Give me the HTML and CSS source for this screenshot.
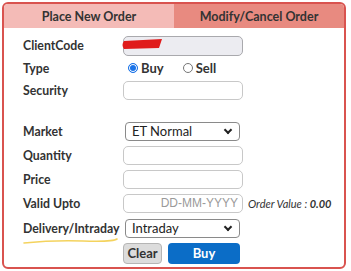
FILE: index.html
```html
<!DOCTYPE html>
<html lang="en">
<head>
    <meta charset="UTF-8">
    <title>Order Entry</title>
    <link rel="stylesheet" href="styles.css">
</head>
<body>
    <div class="panel">
        <div class="tabs">
            <div class="tab tab-new">Place New Order</div>
            <div class="tab tab-modify">Modify/Cancel Order</div>
        </div>

        <form class="order-form">
            <div class="row r-client">
                <label>ClientCode</label>
                <div class="field">
                    <input type="text" class="txt disabled">
                    <svg class="scribble" width="44" height="12" viewBox="0 0 44 12">
                        <path d="M3 3 Q0 7 3 11 L38 10 L41 1 Z" fill="#e01b1b"/>
                    </svg>
                </div>
            </div>
            <div class="row r-type">
                <label>Type</label>
                <div class="radios">
                    <span class="radio on"></span><span class="rlabel">Buy</span>
                    <span class="radio"></span><span class="rlabel">Sell</span>
                </div>
            </div>
            <div class="row r-security">
                <label>Security</label>
                <input type="text" class="txt">
            </div>
            <div class="row r-market">
                <label>Market</label>
                <div class="sel">ET Normal<span class="chev"></span></div>
            </div>
            <div class="row r-qty">
                <label>Quantity</label>
                <input type="text" class="txt">
            </div>
            <div class="row r-price">
                <label>Price</label>
                <input type="text" class="txt">
            </div>
            <div class="row r-valid">
                <label>Valid Upto</label>
                <input type="text" class="txt date" placeholder="DD-MM-YYYY">
                <span class="order-value">Order Value : <b>0.00</b></span>
            </div>
            <div class="row r-delivery">
                <label class="marked">Delivery/Intraday
                    <svg class="underline" width="96" height="8" viewBox="0 0 96 8">
                        <path d="M1 6 Q30 3 60 4 T94 2" stroke="#f4d35e" stroke-width="1.6" fill="none" stroke-linecap="round"/>
                    </svg>
                </label>
                <div class="sel">Intraday<span class="chev"></span></div>
            </div>
            <div class="row r-buttons">
                <label></label>
                <button type="button" class="btn-clear">Clear</button>
                <button type="button" class="btn-buy">Buy</button>
            </div>
        </form>
    </div>
</body>
</html>
```

FILE: styles.css
```css
body {
    margin: 0;
    background: #fff;
    font-family: 'Lato', 'Open Sans', sans-serif;
    color: #333;
}

.panel {
    margin: 2px 0 0 2px;
    width: 340px;
    height: 263px;
    border: 2px solid #d9534f;
    border-radius: 6px;
    overflow: hidden;
}

.tabs {
    display: flex;
    height: 24px;
}

.tab {
    flex: 1;
    display: flex;
    align-items: center;
    justify-content: center;
    font-weight: bold;
    font-size: 12.5px;
    color: #333;
}

.tab-new {
    background: #f4bbb7;
}

.tab-modify {
    background: #e88a80;
}

.order-form {
    padding: 5px 0 0 19px;
}

.row {
    display: flex;
    align-items: center;
    height: 24px;
}

.row label {
    width: 100px;
    flex: none;
    font-weight: bold;
    font-size: 12.3px;
    color: #333;
    position: relative;
}

.r-client { height: 24px; }
.r-type { height: 22px; }
.r-security { height: 22px; }
.r-market { height: 24px; margin-top: 18px; }
.r-qty { height: 24px; }
.r-price { height: 24px; }
.r-valid { height: 24px; }
.r-delivery { height: 26px; }
.r-buttons { height: 24px; }

.field {
    position: relative;
}

.txt {
    box-sizing: border-box;
    width: 120px;
    height: 19px;
    margin: 0;
    border: 1px solid #c8c8c8;
    border-radius: 5px;
    background: #fff;
    padding: 0 4px;
    font-family: 'Liberation Sans', sans-serif;
    font-size: 12px;
}

.txt.disabled {
    height: 20px;
    background: #ececf1;
    border-color: #a9a9ad;
}

.scribble {
    position: absolute;
    left: -2px;
    top: 4px;
}

.date {
    text-align: right;
}

.date::placeholder {
    color: #9a9a9a;
}

.order-value {
    margin-left: 5px;
    font-size: 11px;
    font-style: italic;
    color: #333;
}

.radios {
    display: flex;
    align-items: center;
    padding-left: 5px;
}

.radio {
    width: 8px;
    height: 8px;
    border: 1px solid #767676;
    border-radius: 50%;
    margin-right: 3px;
}

.radio.on {
    border-color: #1a73e8;
    background: #1a73e8;
    box-shadow: inset 0 0 0 1px #fff;
}

.rlabel {
    font-weight: bold;
    font-size: 13px;
    margin-right: 19px;
}

.sel {
    box-sizing: border-box;
    width: 115px;
    height: 19px;
    margin-left: 2px;
    border: 1px solid #8a8a8a;
    border-radius: 4px;
    padding: 0 6px;
    font-size: 13px;
    display: flex;
    align-items: center;
    justify-content: space-between;
    color: #222;
}

.chev {
    width: 4px;
    height: 4px;
    border-right: 2px solid #222;
    border-bottom: 2px solid #222;
    transform: rotate(45deg);
    margin: -3px 2px 0 0;
}

.marked .underline {
    position: absolute;
    left: 0;
    top: 16px;
}

.btn-clear {
    width: 39px;
    height: 21px;
    margin: 0 6px 0 0;
    border: 1px solid #b5b5b5;
    border-radius: 4px;
    background: #dcdcdc;
    font-family: 'Lato', sans-serif;
    font-weight: bold;
    font-size: 13px;
    color: #333;
    padding: 0;
}

.btn-buy {
    width: 72px;
    height: 21px;
    margin: 0;
    border: none;
    border-radius: 4px;
    background: #0b6dc7;
    font-family: 'Lato', sans-serif;
    font-weight: bold;
    font-size: 13px;
    color: #fff;
    padding: 0;
}
```
